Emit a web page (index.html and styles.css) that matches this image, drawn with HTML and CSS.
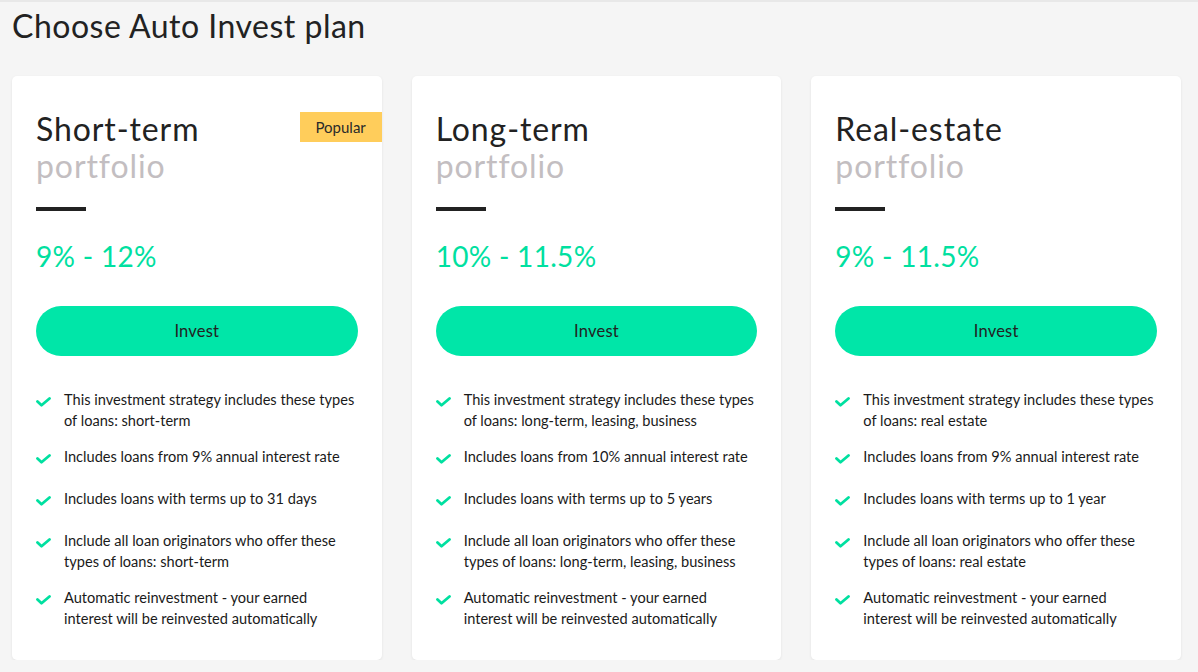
FILE: index.html
```html
<!DOCTYPE html>
<html>
<head>
<meta charset="utf-8">
<link rel="stylesheet" href="styles.css">
</head>
<body>
<div class="page">
  <h1 class="page-title">Choose Auto Invest plan</h1>
  <div class="plans">
    <div class="card">
      <span class="badge">Popular</span>
      <h2 class="card-title">Short-term<span class="sub">portfolio</span></h2>
      <div class="bar"></div>
      <div class="rate">9% - 12%</div>
      <button class="btn">Invest</button>
      <ul class="features">
        <li><svg class="check" viewBox="0 0 15 10"><polyline points="1.5,4.5 5.5,8.3 13.5,1.5"/></svg><span>This investment strategy includes these types of loans: short-term</span></li>
        <li><svg class="check" viewBox="0 0 15 10"><polyline points="1.5,4.5 5.5,8.3 13.5,1.5"/></svg><span>Includes loans from 9% annual interest rate</span></li>
        <li><svg class="check" viewBox="0 0 15 10"><polyline points="1.5,4.5 5.5,8.3 13.5,1.5"/></svg><span>Includes loans with terms up to 31 days</span></li>
        <li><svg class="check" viewBox="0 0 15 10"><polyline points="1.5,4.5 5.5,8.3 13.5,1.5"/></svg><span>Include all loan originators who offer these types of loans: short-term</span></li>
        <li><svg class="check" viewBox="0 0 15 10"><polyline points="1.5,4.5 5.5,8.3 13.5,1.5"/></svg><span>Automatic reinvestment - your earned interest will be reinvested automatically</span></li>
      </ul>
    </div>
    <div class="card">
      <h2 class="card-title">Long-term<span class="sub">portfolio</span></h2>
      <div class="bar"></div>
      <div class="rate">10% - 11.5%</div>
      <button class="btn">Invest</button>
      <ul class="features">
        <li><svg class="check" viewBox="0 0 15 10"><polyline points="1.5,4.5 5.5,8.3 13.5,1.5"/></svg><span>This investment strategy includes these types of loans: long-term, leasing, business</span></li>
        <li><svg class="check" viewBox="0 0 15 10"><polyline points="1.5,4.5 5.5,8.3 13.5,1.5"/></svg><span>Includes loans from 10% annual interest rate</span></li>
        <li><svg class="check" viewBox="0 0 15 10"><polyline points="1.5,4.5 5.5,8.3 13.5,1.5"/></svg><span>Includes loans with terms up to 5 years</span></li>
        <li><svg class="check" viewBox="0 0 15 10"><polyline points="1.5,4.5 5.5,8.3 13.5,1.5"/></svg><span>Include all loan originators who offer these types of loans: long-term, leasing, business</span></li>
        <li><svg class="check" viewBox="0 0 15 10"><polyline points="1.5,4.5 5.5,8.3 13.5,1.5"/></svg><span>Automatic reinvestment - your earned interest will be reinvested automatically</span></li>
      </ul>
    </div>
    <div class="card">
      <h2 class="card-title">Real-estate<span class="sub">portfolio</span></h2>
      <div class="bar"></div>
      <div class="rate">9% - 11.5%</div>
      <button class="btn">Invest</button>
      <ul class="features">
        <li><svg class="check" viewBox="0 0 15 10"><polyline points="1.5,4.5 5.5,8.3 13.5,1.5"/></svg><span>This investment strategy includes these types of loans: real estate</span></li>
        <li><svg class="check" viewBox="0 0 15 10"><polyline points="1.5,4.5 5.5,8.3 13.5,1.5"/></svg><span>Includes loans from 9% annual interest rate</span></li>
        <li><svg class="check" viewBox="0 0 15 10"><polyline points="1.5,4.5 5.5,8.3 13.5,1.5"/></svg><span>Includes loans with terms up to 1 year</span></li>
        <li><svg class="check" viewBox="0 0 15 10"><polyline points="1.5,4.5 5.5,8.3 13.5,1.5"/></svg><span>Include all loan originators who offer these types of loans: real estate</span></li>
        <li><svg class="check" viewBox="0 0 15 10"><polyline points="1.5,4.5 5.5,8.3 13.5,1.5"/></svg><span>Automatic reinvestment - your earned interest will be reinvested automatically</span></li>
      </ul>
    </div>
  </div>
</div>
</body>
</html>
```

FILE: styles.css
```css
* { box-sizing: border-box; }
html, body {
  margin: 0;
  background: #f5f5f5;
}
body {
  font-family: "Lato", "Open Sans", sans-serif;
  color: #1f1f1f;
  border-top: 2px solid #e8e8e8;
}
.page {
  padding: 0 17px 0 12px;
  width: 1198px;
}
.page-title {
  margin: 0;
  padding-top: 4px;
  font-size: 32px;
  line-height: 40px;
  font-weight: 400;
  letter-spacing: 0.5px;
  color: #222;
}
.plans {
  margin-top: 30px;
  display: grid;
  grid-template-columns: repeat(3, 1fr);
  column-gap: 30px;
}
.card {
  position: relative;
  background: #fff;
  border-radius: 5px;
  box-shadow: 0 1px 3px rgba(0,0,0,0.08);
  padding: 34px 24px 31px 24px;
  height: 584px;
}
.badge {
  position: absolute;
  top: 36px;
  right: 0;
  width: 82px;
  height: 30px;
  background: #ffcd5b;
  font-size: 15px;
  line-height: 30px;
  text-align: center;
  color: #2a2a2a;
}
.card-title {
  margin: 0;
  font-size: 32px;
  line-height: 37px;
  font-weight: 400;
  letter-spacing: 0.9px;
  color: #222;
}
.card-title .sub {
  display: block;
  color: #c3bec1;
}
.bar {
  margin-top: 23px;
  width: 50px;
  height: 4px;
  background: #222;
}
.rate {
  margin-top: 25px;
  font-size: 28px;
  line-height: 40px;
  letter-spacing: 0.3px;
  color: #00e0a0;
}
.btn {
  display: block;
  margin-top: 30px;
  width: 100%;
  height: 50px;
  border: 0;
  border-radius: 25px;
  background: #00e6a8;
  font-family: inherit;
  font-size: 16.5px;
  letter-spacing: 0.2px;
  color: #222;
  cursor: pointer;
}
.features {
  list-style: none;
  margin: 33px 0 0 0;
  padding: 0;
}
.features li {
  display: flex;
  align-items: flex-start;
  min-height: 27px;
  margin-bottom: 15px;
  font-size: 14.6px;
  line-height: 21px;
  color: #1a1a1a;
}
.features li:last-child { margin-bottom: 0; }
.check {
  flex: 0 0 15px;
  width: 15px;
  height: 10px;
  margin-top: 8px;
  margin-right: 13px;
  fill: none;
  stroke: #00e0a0;
  stroke-width: 2.8;
  stroke-linecap: round;
  stroke-linejoin: round;
}
```
